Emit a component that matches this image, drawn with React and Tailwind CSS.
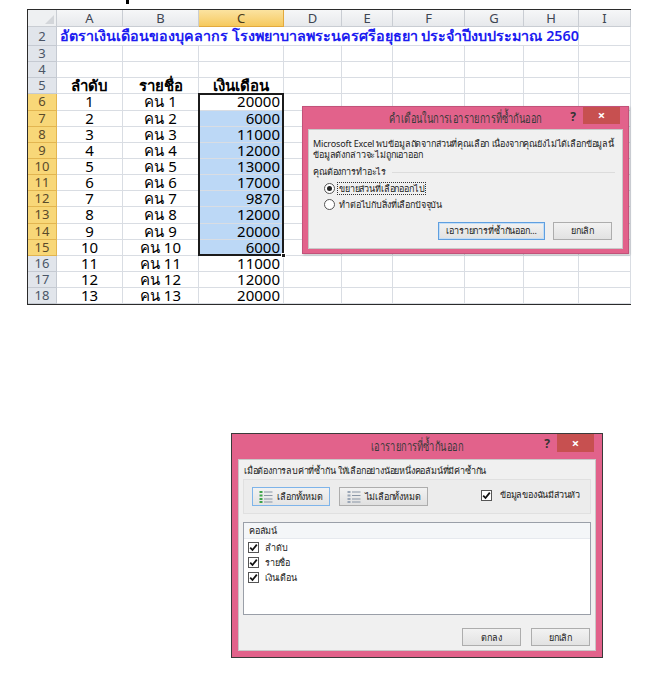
import { useState } from 'react';

const cols = [
    { key: 'A', w: 66 },
    { key: 'B', w: 76 },
    { key: 'C', w: 85 },
    { key: 'D', w: 58 },
    { key: 'E', w: 51 },
    { key: 'F', w: 72 },
    { key: 'G', w: 59 },
    { key: 'H', w: 55 },
    { key: 'I', w: 52 },
];

const salaries = [20000, 6000, 11000, 12000, 13000, 17000, 9870, 12000, 20000, 6000, 11000, 12000, 20000];

const sheetFont = { fontFamily: '"Noto Sans", "DejaVu Sans", sans-serif' };

const RowNum = ({ n, active }) => (
    <div
        className={`w-[29px] shrink-0 flex items-center justify-center text-[13px] leading-[15px] border-r border-b ${
            active
                ? 'bg-[#f8d778] border-[#e2b550] text-[#5a4a2a]'
                : 'bg-[#e1e5eb] border-[#c5cad2] text-[#4a5566]'
        }`}
    >
        {n}
    </div>
);

const Cell = ({ w, children, align = 'center', className = '' }) => (
    <div
        style={{ width: w }}
        className={`shrink-0 h-full flex items-center border-r border-b border-[#d9dde3] px-[3px] text-[15px] leading-[15px] text-black ${
            align === 'right' ? 'justify-end' : align === 'left' ? 'justify-start' : 'justify-center'
        } ${className}`}
    >
        {children}
    </div>
);

const Sheet = () => {
    const blank = [3, 4];
    return (
        <div className="relative ml-[27px] mt-[8px] w-[604px] border-[1.5px] border-[#2b2b2b] bg-white" style={sheetFont}>
            {/* column headers */}
            <div className="flex h-[17px]">
                <div className="w-[29px] shrink-0 relative bg-[#eef0f2] border-r border-b border-[#c9cdd3]">
                    <div className="absolute right-[2px] bottom-[2px] w-0 h-0 border-l-[9px] border-l-transparent border-b-[9px] border-b-[#d3d6da]" />
                </div>
                {cols.map(c => (
                    <div
                        key={c.key}
                        style={{ width: c.w }}
                        className={`shrink-0 flex items-center justify-center text-[13px] leading-[15px] border-r border-b ${
                            c.key === 'C'
                                ? 'bg-gradient-to-b from-[#fbe3a0] to-[#f6c95c] border-[#e2a93e] text-[#4a3a1a]'
                                : 'bg-gradient-to-b from-[#f6f7f8] to-[#e7e9ec] border-[#c9cdd3] text-[#3e4552]'
                        }`}
                    >
                        {c.key}
                    </div>
                ))}
            </div>

            {/* row 2 title */}
            <div className="flex h-[19px]">
                <RowNum n={2} />
                <div className="w-[522px] shrink-0 border-r border-b border-[#d9dde3] flex items-center pl-[3px] whitespace-nowrap text-[14.3px] leading-[18px] font-semibold text-[#1c1cf0]">
                    อัตราเงินเดือนของบุคลากร โรงพยาบาลพระนครศรีอยุธยา ประจำปีงบประมาณ 2560
                </div>
                <Cell w={52} />
            </div>

            {blank.map(n => (
                <div key={n} className="flex h-[16.15px]">
                    <RowNum n={n} />
                    {cols.map(c => <Cell key={c.key} w={c.w} />)}
                </div>
            ))}

            {/* row 5 headers */}
            <div className="flex h-[16.15px]">
                <RowNum n={5} />
                <Cell w={66} className="font-semibold">ลำดับ</Cell>
                <Cell w={76} className="font-semibold">รายชื่อ</Cell>
                <Cell w={85} className="font-semibold">เงินเดือน</Cell>
                {cols.slice(3).map(c => <Cell key={c.key} w={c.w} />)}
            </div>

            {salaries.map((s, i) => {
                const row = i + 6;
                const inSel = row >= 6 && row <= 15;
                return (
                    <div key={row} className="flex h-[16.15px]">
                        <RowNum n={row} active={inSel} />
                        <Cell w={66}>{i + 1}</Cell>
                        <Cell w={76}>คน {i + 1}</Cell>
                        <Cell
                            w={85}
                            align="right"
                            className={inSel && row > 6 ? 'bg-[#bcd8f6]' : ''}
                        >
                            {s}
                        </Cell>
                        {cols.slice(3).map(c => <Cell key={c.key} w={c.w} />)}
                    </div>
                );
            })}

            {/* selection outline C6:C15 */}
            <div className="absolute left-[170px] top-[83px] w-[86px] h-[163px] border-[2.5px] border-[#1b1b1b] pointer-events-none">
                <div className="absolute -right-[4px] -bottom-[4px] w-[5px] h-[5px] bg-[#1b1b1b] border border-white" />
            </div>

            <WarnDialog />
        </div>
    );
};

// the title font in the shot is a narrow one, so squeeze ours horizontally
const TitleBar = ({ title, h, btnH }) => (
    <div className={`relative flex items-center justify-center ${h}`}>
        <span className="inline-block text-[13.5px] leading-[17px] scale-x-[0.69] text-[#3a3a3a] whitespace-nowrap">{title}</span>
        <span className="absolute right-[52px] top-[1px] text-[12px] font-bold text-[#333]">?</span>
        <div className={`absolute right-[8px] top-0 w-[37px] ${btnH} bg-[#c75050] flex items-center justify-center text-white text-[13px] font-bold`}>
            ×
        </div>
    </div>
);

const Btn = ({ children, w, focus }) => (
    <div
        style={{ width: w }}
        className={`h-[18px] flex items-center justify-center whitespace-nowrap text-[9px] text-[#222] bg-gradient-to-b from-[#f2f2f2] to-[#e2e2e2] border ${
            focus ? 'border-[#5f9fe0] shadow-[inset_0_0_0_1px_#c4def6]' : 'border-[#adadad]'
        }`}
    >
        {children}
    </div>
);

const Radio = ({ on }) => (
    <div className="w-[11px] h-[11px] rounded-full border border-[#555] bg-white flex items-center justify-center">
        {on && <div className="w-[5px] h-[5px] rounded-full bg-[#222]" />}
    </div>
);

const WarnDialog = () => {
    const [choice, setChoice] = useState(0);
    return (
        <div className="absolute left-[274px] top-[96px] w-[327px] h-[148px] bg-[#e2628b] border border-[#c2527a] shadow-[1px_1px_2px_rgba(0,0,0,0.25)] flex flex-col">
            <TitleBar title="คำเตือนในการเอารายการที่ซ้ำกันออก" h="h-[22px]" btnH="h-[17px]" />
            <div className="mx-[5px] mb-[4px] flex-1 bg-[#f0f0f0] border border-[#c8c8c8] px-[4px] pt-[8px] text-[9px] tracking-[-0.15px] text-[#222] whitespace-nowrap">
                <p className="leading-[11px]">
                    Microsoft Excel พบข้อมูลถัดจากส่วนที่คุณเลือก เนื่องจากคุณยังไม่ได้เลือกข้อมูลนี้
                    <br />
                    ข้อมูลดังกล่าวจะไม่ถูกเอาออก
                </p>
                <div className="flex items-center gap-[6px] mt-[6px] h-[12px]">
                    <span>คุณต้องการทำอะไร</span>
                    <div className="flex-1 h-px bg-[#dcdcdc] mr-[3px]" />
                </div>
                <div className="pl-[11px] mt-[4px] flex flex-col gap-[4px]">
                    {['ขยายส่วนที่เลือกออกไป', 'ทำต่อไปกับสิ่งที่เลือกปัจจุบัน'].map((t, i) => (
                        <button key={t} onClick={() => setChoice(i)} className="h-[12px] flex items-center gap-[3px] text-left">
                            <Radio on={choice === i} />
                            <span className={choice === i ? 'outline outline-1 outline-dotted outline-[#333] px-[1px] leading-[11px]' : 'px-[1px] leading-[11px]'}>{t}</span>
                        </button>
                    ))}
                </div>
                <div className="flex justify-end gap-[8px] mt-[12px] pr-[6px]">
                    <Btn w={107} focus>เอารายการที่ซ้ำกันออก...</Btn>
                    <Btn w={59}>ยกเลิก</Btn>
                </div>
            </div>
        </div>
    );
};

const Check = () => (
    <div className="w-[11px] h-[11px] shrink-0 border border-[#555] bg-white flex items-center justify-center">
        <svg width="9" height="9" viewBox="0 0 9 9">
            <path d="M1.2 4.6 L3.5 7 L7.8 1.6" fill="none" stroke="#111" strokeWidth="1.8" />
        </svg>
    </div>
);

const ListIcon = ({ color }) => (
    <svg width="14" height="12" viewBox="0 0 14 12">
        {[1, 4.5, 8, 11].map(y => (
            <g key={y}>
                <rect x="0.5" y={y - 1} width="3" height="2" fill={color} />
                <rect x="5" y={y - 0.5} width="8.5" height="1" fill="#8a96a6" />
            </g>
        ))}
    </svg>
);

const RemoveDialog = () => {
    const columns = ['ลำดับ', 'รายชื่อ', 'เงินเดือน'];
    return (
        <div className="ml-[231px] mt-[128px] w-[372px] h-[225px] bg-[#e2628b] border border-[#3a3a3a] flex flex-col" style={sheetFont}>
            <TitleBar title="เอารายการที่ซ้ำกันออก" h="h-[25px]" btnH="h-[18px]" />
            <div className="mx-[6px] mb-[6px] flex-1 bg-[#f0f0f0] border border-[#c8c8c8] px-[4px] pt-[5px] text-[9px] tracking-[-0.2px] text-[#222] whitespace-nowrap flex flex-col">
                <p className="pl-[1px] leading-[12px]">เมื่อต้องการลบค่าที่ซ้ำกัน ให้เลือกอย่างน้อยหนึ่งคอลัมน์ที่มีค่าซ้ำกัน</p>
                <div className="mt-[2px] h-[35px] bg-[#ececec] border border-[#e0e0e0] flex items-start pt-[7px] px-[8px]">
                    <div className="w-[78px] h-[19px] flex items-center justify-center gap-[4px] bg-gradient-to-b from-[#f2f2f2] to-[#e4e4e4] border border-[#7eb4ea]">
                        <ListIcon color="#3fa34a" />
                        <span>เลือกทั้งหมด</span>
                    </div>
                    <div className="ml-[9px] w-[89px] h-[19px] flex items-center justify-center gap-[4px] bg-gradient-to-b from-[#f2f2f2] to-[#e0e0e0] border border-[#adadad]">
                        <ListIcon color="#9aa6b6" />
                        <span>ไม่เลือกทั้งหมด</span>
                    </div>
                    <div className="ml-auto mt-[1px] flex items-center gap-[8px] pr-[2px]">
                        <Check />
                        <span>ข้อมูลของฉันมีส่วนหัว</span>
                    </div>
                </div>
                <div className="mt-[8px] h-[93px] bg-white border border-[#9a9fa8] flex flex-col">
                    <div className="h-[16px] flex items-center px-[5px] bg-[#f4f6f8] border-b border-[#e6e9ee]">คอลัมน์</div>
                    <div className="flex flex-col gap-[2px] pt-[2px] px-[4px]">
                        {columns.map(c => (
                            <div key={c} className="h-[13px] flex items-center gap-[6px]">
                                <Check />
                                <span>{c}</span>
                            </div>
                        ))}
                    </div>
                </div>
                <div className="mt-auto mb-[4px] flex justify-end gap-[10px] pr-[1px]">
                    <Btn w={59}>ตกลง</Btn>
                    <Btn w={59}>ยกเลิก</Btn>
                </div>
            </div>
        </div>
    );
};

export default function App() {
    return (
        <div className="w-[657px] min-h-[691px] bg-white relative">
            <div className="absolute left-[126px] top-0 w-[3px] h-[4px] bg-black" />
            <div className="pt-px">
                <Sheet />
            </div>
            <RemoveDialog />
        </div>
    );
}
